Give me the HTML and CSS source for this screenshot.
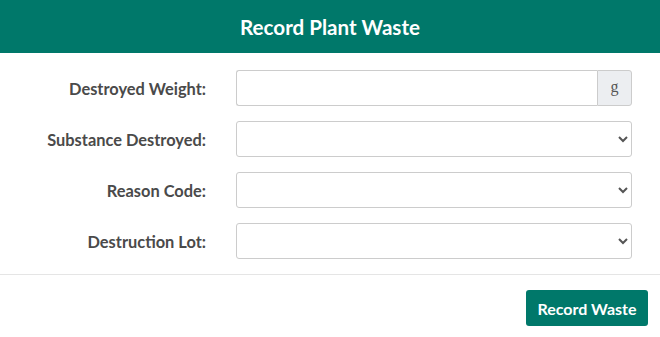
FILE: index.html
```html
<!DOCTYPE html>
<html lang="en">
<head>
  <meta charset="UTF-8">
  <meta name="viewport" content="width=device-width, initial-scale=1.0">
  <title>Record Plant Waste</title>
  <link rel="stylesheet" href="styles.css">
</head>
<body>
  <div class="modal">
    <header class="modal-header">
      <h1>Record Plant Waste</h1>
    </header>

    <form class="modal-body">
      <label class="field-label" for="weight">Destroyed Weight:</label>
      <div class="input-group">
        <input id="weight" type="text">
        <span class="addon">g</span>
      </div>

      <label class="field-label" for="substance">Substance Destroyed:</label>
      <select id="substance"><option></option></select>

      <label class="field-label" for="reason">Reason Code:</label>
      <select id="reason"><option></option></select>

      <label class="field-label" for="lot">Destruction Lot:</label>
      <select id="lot"><option></option></select>
    </form>

    <footer class="modal-footer">
      <button type="button" class="btn">Record Waste</button>
    </footer>
  </div>
</body>
</html>
```

FILE: styles.css
```css
body {
  margin: 0;
  font-family: Lato, "Open Sans", sans-serif;
  color: #555;
  background: #fff;
}
.modal-header {
  background: #00786a;
  height: 53px;
  display: flex;
  align-items: center;
  justify-content: center;
}
.modal-header h1 {
  margin: 0;
  font-size: 20.6px;
  font-weight: bold;
  color: #fff;
}
.modal-body {
  display: grid;
  grid-template-columns: 206px 396px;
  grid-auto-rows: 36px;
  column-gap: 30px;
  row-gap: 15px;
  padding: 17px 0 15px 0;
  border-bottom: 1px solid #e5e5e5;
  margin: 0;
}
.field-label {
  display: flex;
  align-items: center;
  justify-content: flex-end;
  font-size: 16.4px;
  font-weight: bold;
  color: #4a4a4a;
}
.input-group {
  display: flex;
}
.input-group input {
  flex: 1;
  min-width: 0;
  height: 36px;
  box-sizing: border-box;
  border: 1px solid #ccc;
  border-right: none;
  border-radius: 3px 0 0 3px;
  padding: 6px 12px;
  font: inherit;
}
.addon {
  width: 35px;
  box-sizing: border-box;
  border: 1px solid #ccc;
  border-radius: 0 3px 3px 0;
  background: #eceef1;
  display: flex;
  align-items: center;
  justify-content: center;
  font-family: "Liberation Serif", serif;
  font-size: 16px;
  color: #555;
  padding-bottom: 2px;
}
select {
  height: 36px;
  box-sizing: border-box;
  border: 1px solid #ccc;
  border-radius: 3px;
  background: #fff;
  font: inherit;
  color: #555;
  padding: 0 6px;
}
.modal-footer {
  display: flex;
  justify-content: flex-end;
  padding: 15px 12px;
}
.btn {
  background: #00786a;
  color: #fff;
  border: none;
  border-radius: 3px;
  height: 36px;
  width: 122px;
  font-family: Lato, sans-serif;
  font-size: 16px;
  font-weight: bold;
}
```
